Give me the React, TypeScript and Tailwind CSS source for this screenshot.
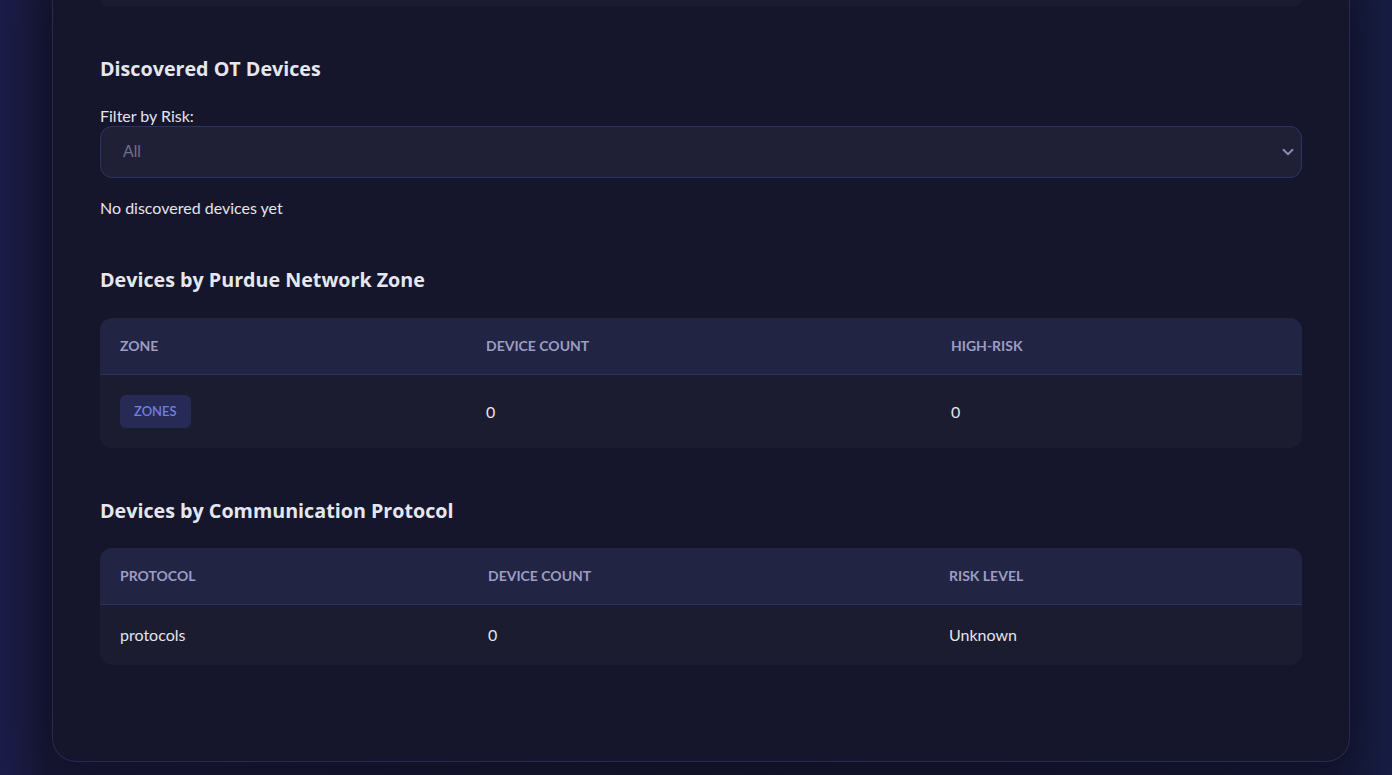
import { ChevronDown } from 'lucide-react';

const zoneRows = [{ zone: 'zones', count: 0, highRisk: 0 }];
const protocolRows = [{ protocol: 'protocols', count: 0, risk: 'Unknown' }];

const headingFont = { fontFamily: '"Open Sans", "Noto Sans", sans-serif' };

export default function App() {
  return (
    <div
      className="min-h-screen w-full bg-[linear-gradient(90deg,#1c1c4a_0%,#161632_3.5%,#141429_50%,#141630_96%,#181d44_100%)] pb-[14px] pl-[52px] pr-[42px] text-[#e4e4ec]"
      style={{ fontFamily: 'Lato, "Noto Sans", sans-serif' }}
    >
      <div className="rounded-b-[24px] border-x border-b border-[#272a52] bg-[#15162b] px-[47px] pb-[96px] shadow-[0_0_40px_rgba(10,10,30,0.5)]">
        <div className="h-[6px] rounded-b-xl bg-[#1a1b31]" />

        <section className="mt-[49px]">
          <h2 className="text-[19.7px] font-bold leading-7 text-[#e6e6ee]" style={headingFont}>
            Discovered OT Devices
          </h2>
          <label className="mt-[23px] block text-base leading-5 text-[#e4e4ec]">Filter by Risk:</label>
          <div className="relative">
            <select
              className="h-[52px] w-full appearance-none rounded-xl border border-[#2d3262] bg-[#1f2035] px-[22px] text-base text-[#6e6f90] outline-none"
              style={{ fontFamily: '"Liberation Sans", Arial, sans-serif' }}
              defaultValue="All"
            >
              <option>All</option>
              <option>High</option>
              <option>Medium</option>
              <option>Low</option>
            </select>
            <ChevronDown
              className="pointer-events-none absolute right-[5px] top-1/2 h-[18px] w-[18px] -translate-y-1/2 text-[#8a8bb0]"
              strokeWidth={2.5}
            />
          </div>
          <p className="mt-[18px] text-base leading-6">No discovered devices yet</p>
        </section>

        <section className="mt-[46px]">
          <h2 className="text-[19.7px] font-bold leading-7 text-[#e6e6ee]" style={headingFont}>
            Devices by Purdue Network Zone
          </h2>
          <div className="mt-6 overflow-hidden rounded-xl bg-[#1b1c2f]">
            <table className="w-full border-collapse text-left">
              <thead className="bg-[#222444]">
                <tr className="border-b border-[#2b3163]">
                  <Th className="w-[366px]">Zone</Th>
                  <Th className="w-[465px]">Device Count</Th>
                  <Th>High-Risk</Th>
                </tr>
              </thead>
              <tbody>
                {zoneRows.map((r) => (
                  <tr key={r.zone}>
                    <td className="px-5 py-5">
                      <div className="flex">
                        <span className="flex h-[33px] items-center rounded-md bg-[#272a55] px-[14px] text-[13px] font-semibold uppercase text-[#6c80e4]">
                          {r.zone}
                        </span>
                      </div>
                    </td>
                    <td className="px-5 py-5 text-base">{r.count}</td>
                    <td className="px-5 py-5 text-base">{r.highRisk}</td>
                  </tr>
                ))}
              </tbody>
            </table>
          </div>
        </section>

        <section className="mt-[49px]">
          <h2 className="text-[19.7px] font-bold leading-7 text-[#e6e6ee]" style={headingFont}>
            Devices by Communication Protocol
          </h2>
          <div className="mt-[23px] overflow-hidden rounded-xl bg-[#1b1c2f]">
            <table className="w-full border-collapse text-left">
              <thead className="bg-[#222444]">
                <tr className="border-b border-[#2b3163]">
                  <Th className="w-[368px]">Protocol</Th>
                  <Th className="w-[461px]">Device Count</Th>
                  <Th>Risk Level</Th>
                </tr>
              </thead>
              <tbody>
                {protocolRows.map((r) => (
                  <tr key={r.protocol}>
                    <td className="px-5 py-[18px] text-base leading-6">{r.protocol}</td>
                    <td className="px-5 py-[18px] text-base leading-6">{r.count}</td>
                    <td className="px-5 py-[18px] text-base leading-6">{r.risk}</td>
                  </tr>
                ))}
              </tbody>
            </table>
          </div>
        </section>
      </div>
    </div>
  );
}

function Th({ children, className = '' }: { children: React.ReactNode; className?: string }) {
  return (
    <th className={`px-5 py-[18px] text-sm font-bold uppercase leading-5 text-[#9c9dc2] ${className}`}>
      {children}
    </th>
  );
}
